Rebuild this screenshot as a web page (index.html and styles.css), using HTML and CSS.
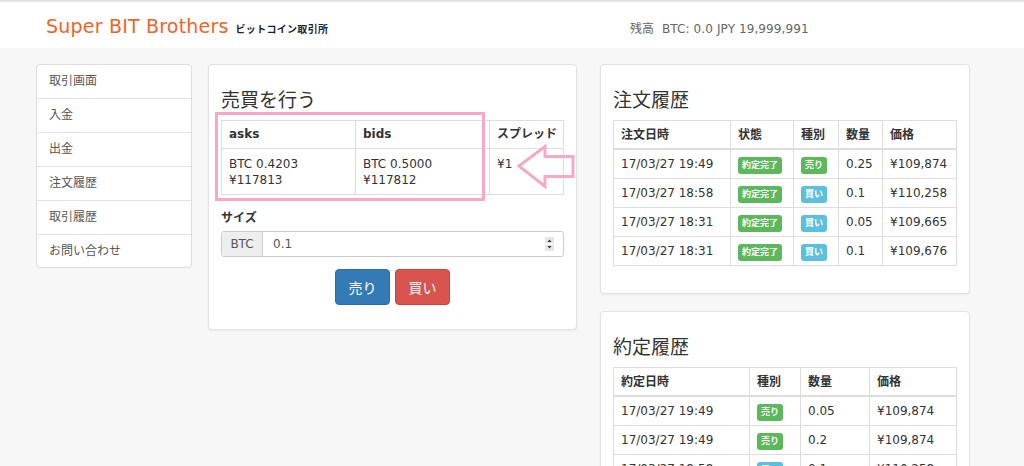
FILE: index.html
```html
<!DOCTYPE html>
<html lang="ja">
<head>
<meta charset="utf-8">
<title>Super BIT Brothers</title>
<link rel="stylesheet" href="styles.css">
</head>
<body>
<header class="topbar">
  <div class="brand"><span class="brand-name">Super BIT Brothers</span><span class="brand-sub">ビットコイン取引所</span></div>
  <div class="balance">残高&nbsp;&nbsp;BTC: 0.0 JPY 19,999,991</div>
</header>
<main class="main">
  <nav class="sidebar">
    <a class="nav-item">取引画面</a>
    <a class="nav-item">入金</a>
    <a class="nav-item">出金</a>
    <a class="nav-item">注文履歴</a>
    <a class="nav-item">取引履歴</a>
    <a class="nav-item">お問い合わせ</a>
  </nav>
  <section class="panel trade">
    <h3 class="panel-title">売買を行う</h3>
    <table class="tbl book">
      <thead><tr><th class="c-ask">asks</th><th class="c-bid">bids</th><th>スプレッド</th></tr></thead>
      <tbody><tr><td>BTC 0.4203<br>¥117813</td><td>BTC 0.5000<br>¥117812</td><td>¥1</td></tr></tbody>
    </table>
    <label class="size-label">サイズ</label>
    <div class="input-group">
      <span class="addon">BTC</span>
      <span class="input-field"><span class="val">0.1</span>
        <span class="spin"><svg width="9" height="14" viewBox="0 0 9 14"><rect x="0" y="0" width="9" height="14" fill="#e6e6e6"/><line x1="0" y1="7" x2="9" y2="7" stroke="#fff"/><path d="M2.5 5 L4.5 2.5 L6.5 5 Z" fill="#333"/><path d="M2.5 9 L4.5 11.5 L6.5 9 Z" fill="#333"/></svg></span>
      </span>
    </div>
    <div class="btns">
      <button class="btn btn-sell">売り</button>
      <button class="btn btn-buy">買い</button>
    </div>
    <div class="hl-box"></div>
    <svg class="hl-arrow" width="62" height="48" viewBox="0 0 62 48">
      <path d="M3 23 L29 3.5 L29 13.5 L57 13.5 L57 33.5 L29 33.5 L29 43.5 Z" fill="none" stroke="#f7a8c8" stroke-width="3" stroke-linejoin="miter"/>
    </svg>
  </section>
  <div class="rightcol">
    <section class="panel">
      <h3 class="panel-title">注文履歴</h3>
      <table class="tbl hist">
        <colgroup><col style="width:117px"><col style="width:63px"><col style="width:45px"><col style="width:44px"><col></colgroup>
        <thead><tr><th>注文日時</th><th>状態</th><th>種別</th><th>数量</th><th>価格</th></tr></thead>
        <tbody>
          <tr><td>17/03/27 19:49</td><td><span class="badge ok">約定完了</span></td><td><span class="badge ok">売り</span></td><td>0.25</td><td>¥109,874</td></tr>
          <tr><td>17/03/27 18:58</td><td><span class="badge ok">約定完了</span></td><td><span class="badge info">買い</span></td><td>0.1</td><td>¥110,258</td></tr>
          <tr><td>17/03/27 18:31</td><td><span class="badge ok">約定完了</span></td><td><span class="badge info">買い</span></td><td>0.05</td><td>¥109,665</td></tr>
          <tr><td>17/03/27 18:31</td><td><span class="badge ok">約定完了</span></td><td><span class="badge info">買い</span></td><td>0.1</td><td>¥109,676</td></tr>
        </tbody>
      </table>
    </section>
    <section class="panel">
      <h3 class="panel-title">約定履歴</h3>
      <table class="tbl hist">
        <colgroup><col style="width:136px"><col style="width:51px"><col style="width:69px"><col></colgroup>
        <thead><tr><th>約定日時</th><th>種別</th><th>数量</th><th>価格</th></tr></thead>
        <tbody>
          <tr><td>17/03/27 19:49</td><td><span class="badge ok">売り</span></td><td>0.05</td><td>¥109,874</td></tr>
          <tr><td>17/03/27 19:49</td><td><span class="badge ok">売り</span></td><td>0.2</td><td>¥109,874</td></tr>
          <tr><td>17/03/27 18:58</td><td><span class="badge info">買い</span></td><td>0.1</td><td>¥110,258</td></tr>
        </tbody>
      </table>
    </section>
  </div>
</main>
</body>
</html>
```

FILE: styles.css
```css
* { box-sizing: border-box; }
html, body { margin: 0; padding: 0; }
body {
  background: #f7f7f7;
  font-family: "DejaVu Sans", "Noto Sans CJK JP", sans-serif;
  font-size: 12px;
  color: #333;
  overflow: hidden;
  height: 466px;
}
.topbar {
  height: 48px;
  background: #fff;
  border-top: 2px solid #e2e2e2;
  display: flex;
  align-items: center;
  padding-left: 46px;
}
.brand { display: flex; align-items: baseline; width: 584px; margin-top: 2px; }
.brand-name { font-size: 19px; color: #f06428; letter-spacing: 0.2px; }
.brand-sub { font-size: 10px; font-weight: bold; color: #1e2230; margin-left: 7px; letter-spacing: 0.3px; }
.balance { font-size: 12px; color: #666; margin-top: 4px; letter-spacing: 0.1px; }

.main {
  display: flex;
  align-items: flex-start;
  padding: 16px 0 0 36px;
}
.sidebar {
  width: 156px;
  display: flex;
  flex-direction: column;
  background: #fff;
  border: 1px solid #ddd;
  border-radius: 4px;
}
.nav-item {
  display: block;
  height: 34px;
  line-height: 32px;
  padding-left: 12px;
  color: #555;
  font-size: 12px;
  border-top: 1px solid #e2e2e2;
}
.nav-item:first-child { border-top: none; height: 33px; }
.nav-item:last-child { height: 33px; }

.panel {
  background: #fff;
  border: 1px solid #e2e2e2;
  border-radius: 4px;
  box-shadow: 0 1px 2px rgba(0,0,0,0.05);
  padding: 23px 12px 27px 12px;
}
.panel-title {
  margin: 0 0 8px 0;
  font-size: 19px;
  font-weight: normal;
  line-height: 24px;
  color: #333;
}
.trade {
  position: relative;
  width: 369px;
  margin-left: 16px;
  padding-bottom: 24px;
}
.rightcol {
  width: 370px;
  margin-left: 23px;
  display: flex;
  flex-direction: column;
  gap: 17px;
}
.tbl {
  width: 100%;
  border-collapse: collapse;
  table-layout: fixed;
}
.tbl th, .tbl td {
  border: 1px solid #ddd;
  text-align: left;
  padding: 7px 7px;
  line-height: 14px;
  white-space: nowrap;
  vertical-align: top;
}
.tbl th { font-weight: bold; }
.book th { padding: 6px 7px; line-height: 15px; }
.book td { line-height: 16px; padding: 7px 7px 6px; }
.book .c-ask, .book .c-bid { width: 134px; }
.hist th { border-bottom-width: 2px; padding: 7px 7px 6px; }
.hist td { padding: 7px 7px 7px; }
.badge {
  display: inline-block;
  height: 17px;
  line-height: 17px;
  padding: 0 4px;
  font-size: 9px;
  font-weight: bold;
  color: #fff;
  border-radius: 3px;
  vertical-align: top;
  margin: 0 0 -3px 0;
}
.badge.ok { background: #5cb85c; }
.badge.info { background: #5bc0de; }

.size-label {
  display: block;
  font-weight: bold;
  font-size: 12px;
  margin-top: 15px;
  line-height: 16px;
}
.input-group {
  display: flex;
  height: 26px;
  margin-top: 5px;
  border: 1px solid #ccc;
  border-radius: 3px;
  overflow: hidden;
}
.addon {
  width: 41px;
  background: #eee;
  border-right: 1px solid #ccc;
  color: #555;
  display: flex;
  align-items: center;
  justify-content: center;
}
.input-field {
  flex: 1;
  display: flex;
  align-items: center;
  justify-content: space-between;
  padding: 0 9px 0 10px;
  color: #555;
}
.spin { display: flex; }
.btns {
  display: flex;
  justify-content: center;
  gap: 5px;
  margin-top: 12px;
}
.btn {
  width: 55px;
  height: 36px;
  border: 1px solid transparent;
  border-radius: 4px;
  color: #fff;
  font-family: "DejaVu Sans", "Noto Sans CJK JP", sans-serif;
  font-size: 14px;
  padding: 0;
}
.btn-sell { background: #337ab7; border-color: #2e6da4; }
.btn-buy { background: #d9534f; border-color: #d43f3a; }

.hl-box {
  position: absolute;
  left: 6px;
  top: 47px;
  width: 270px;
  height: 89px;
  border: 3px solid #f7a8c8;
}
.hl-arrow {
  position: absolute;
  left: 307px;
  top: 78px;
}
```
